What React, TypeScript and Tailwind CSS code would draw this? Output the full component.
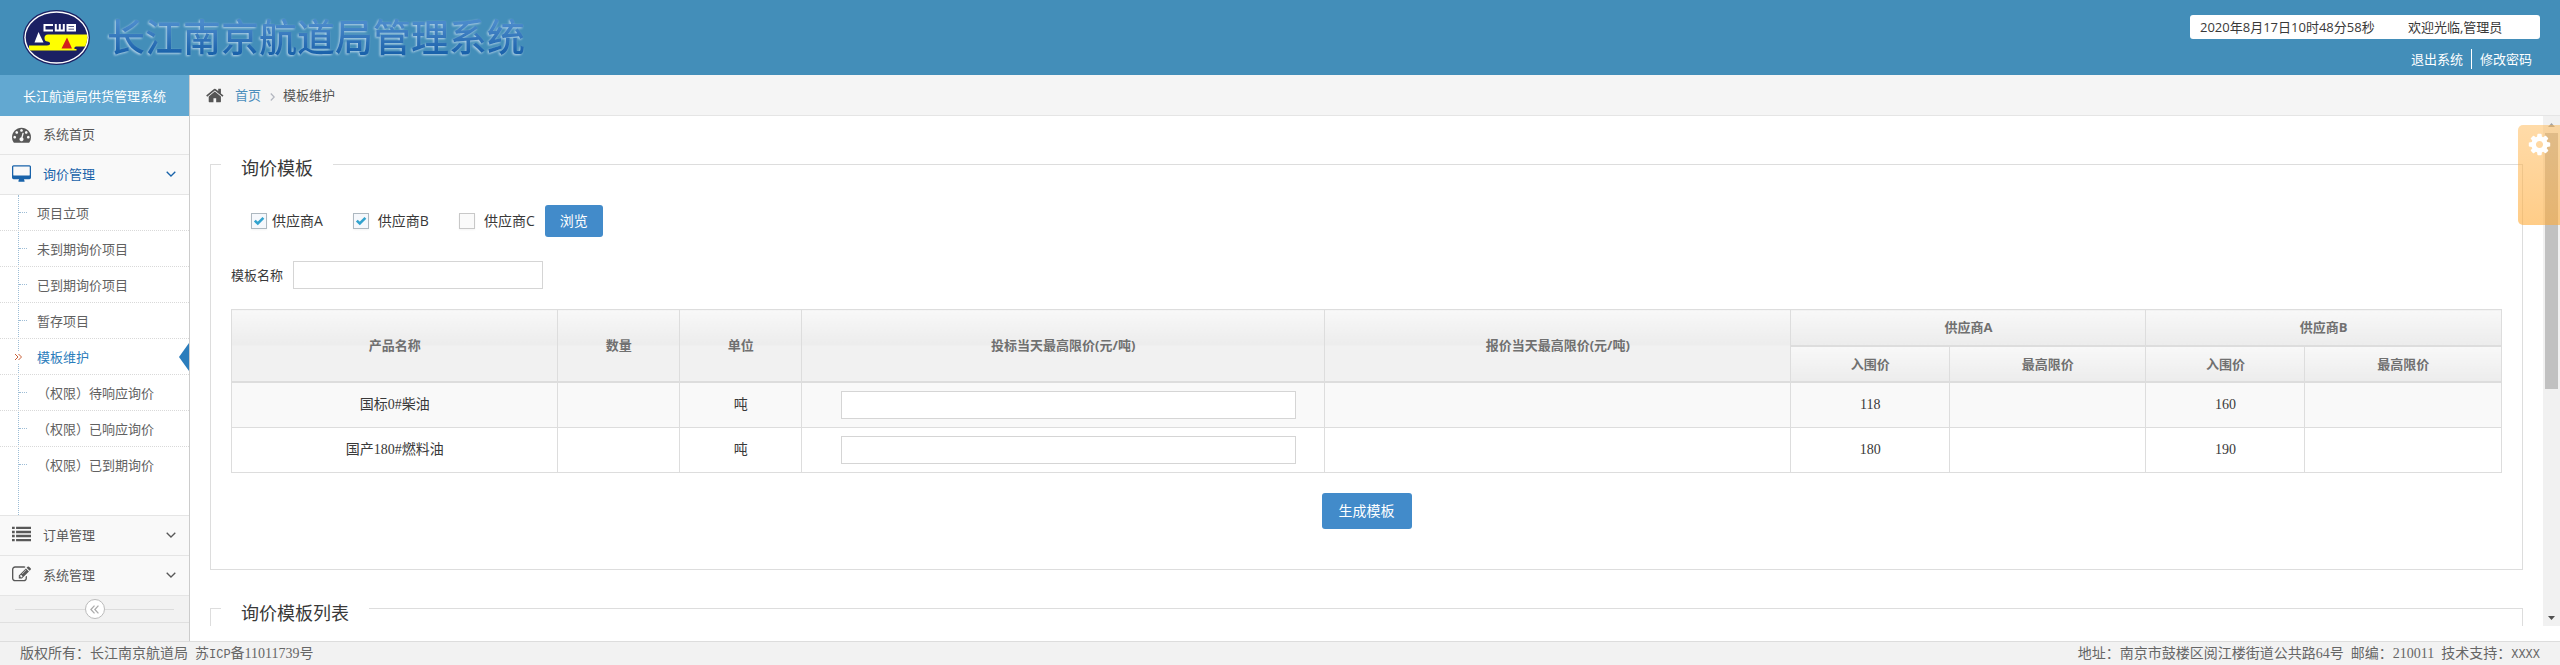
import React from "react";

const PATHS = {
  home: "M1408 992v480q0 26-19 45t-45 19h-384v-384h-256v384h-384q-26 0-45-19t-19-45v-480q0-1 .5-3t.5-3l575-474 575 474q1 2 1 6zm223-69l-62 74q-8 9-21 11h-3q-13 0-21-7l-692-577-692 577q-12 8-24 7-13-2-21-11l-62-74q-8-10-7-23.5t11-21.5l719-599q32-26 76-26t76 26l244 204v-195q0-14 9-23t23-9h192q14 0 23 9t9 23v408l219 182q10 8 11 21.5t-7 23.5z",
  dashboard:
    "M384 1152q0-53-37.5-90.5t-90.5-37.5-90.5 37.5-37.5 90.5 37.5 90.5 90.5 37.5 90.5-37.5 37.5-90.5zm192-448q0-53-37.5-90.5t-90.5-37.5-90.5 37.5-37.5 90.5 37.5 90.5 90.5 37.5 90.5-37.5 37.5-90.5zm428 481l101-382q6-26-7.5-48.5t-38.5-29.5-48 6.5-30 39.5l-101 382q-60 5-107 43.5t-63 98.5q-20 77 20 146t117 89 146-20 89-117q16-60-6-117t-72-91zm660-33q0-53-37.5-90.5t-90.5-37.5-90.5 37.5-37.5 90.5 37.5 90.5 90.5 37.5 90.5-37.5 37.5-90.5zm-640-640q0-53-37.5-90.5t-90.5-37.5-90.5 37.5-37.5 90.5 37.5 90.5 90.5 37.5 90.5-37.5 37.5-90.5zm448 192q0-53-37.5-90.5t-90.5-37.5-90.5 37.5-37.5 90.5 37.5 90.5 90.5 37.5 90.5-37.5 37.5-90.5zm320 448q0 261-141 483-19 29-54 29h-1402q-35 0-54-29-141-221-141-483 0-182 71-348t191-286 286-191 348-71 348 71 286 191 191 286 71 348z",
  desktop:
    "M1728 992v-832q0-13-9.5-22.5t-22.5-9.5h-1600q-13 0-22.5 9.5t-9.5 22.5v832q0 13 9.5 22.5t22.5 9.5h1600q13 0 22.5-9.5t9.5-22.5zm128-832v1088q0 66-47 113t-113 47h-544q0 37 16 77.5t32 71 16 43.5q0 26-19 45t-45 19h-512q-26 0-45-19t-19-45q0-14 16-44t32-70 16-78h-544q-66 0-113-47t-47-113v-1088q0-66 47-113t113-47h1600q66 0 113 47t47 113z",
  list: "M0 160h256v224H0zM384 160h1408v224H384zM0 544h256v224H0zM384 544h1408v224H384zM0 928h256v224H0zM384 928h1408v224H384zM0 1312h256v224H0zM384 1312h1408v224H384z",
  edit: "M888 1184l116-116-152-152-116 116v56h96v96h56zm440-720q-16-16-33 1l-350 350q-17 17-1 33t33-1l350-350q17-17 1-33zm80 594v190q0 119-84.5 203.5t-203.5 84.5h-832q-119 0-203.5-84.5t-84.5-203.5v-832q0-119 84.5-203.5t203.5-84.5h832q63 0 117 25 15 7 18 23 3 17-9 29l-49 49q-14 14-32 8-23-6-45-6h-832q-66 0-113 47t-47 113v832q0 66 47 113t113 47h832q66 0 113-47t47-113v-126q0-13 9-22l64-64q15-15 35-7t20 29zm-96-738l288 288-672 672h-288v-288zm444 132l-92 92-288-288 92-92q28-28 68-28t68 28l152 152q28 28 28 68t-28 68z",
  cog: "M1152 896q0-106-75-181t-181-75-181 75-75 181 75 181 181 75 181-75 75-181zm512-109v222q0 12-8 23t-20 13l-185 28q-19 54-39 91 35 50 107 138 10 12 10 25t-9 23q-27 37-99 108t-94 71q-12 0-26-9l-138-108q-44 23-91 38-16 136-29 186-7 28-36 28h-222q-14 0-24.5-8.5t-11.5-21.5l-28-184q-49-16-90-37l-141 107q-10 9-25 9-14 0-25-11-126-114-165-168-7-10-7-23 0-12 8-23 15-21 51-66.5t54-70.5q-27-50-41-99l-183-27q-13-2-21-12.5t-8-23.5v-222q0-12 8-23t19-13l186-28q14-46 39-92-40-57-107-138-10-12-10-24 0-10 9-23 26-36 98.5-107.5t94.5-71.5q13 0 26 10l138 107q44-23 91-38 16-136 29-186 7-28 36-28h222q14 0 24.5 8.5t11.5 21.5l28 184q49 16 90 37l142-107q9-9 24-9 13 0 25 10 129 119 165 170 7 8 7 22 0 12-8 23-15 21-51 66.5t-54 70.5q26 50 41 98l183 28q13 2 21 12.5t8 23.5z",
};

type IconName = keyof typeof PATHS;

function Icon({ name, className }: { name: IconName; className: string }) {
  return (
    <svg
      viewBox={name === "desktop" ? "-64 0 1920 1664" : "0 0 1792 1792"}
      fill="currentColor"
      className={className}
      aria-hidden="true"
    >
      <path d={PATHS[name]} />
    </svg>
  );
}

function AngleDown() {
  return (
    <svg viewBox="0 0 10 6" className="h-[6px] w-[10px]" fill="none" stroke="currentColor" strokeWidth="1.300" aria-hidden="true">
      <path d="M0.7 0.7 5 5 9.3 0.7" />
    </svg>
  );
}

function Logo() {
  return (
    <svg viewBox="0 0 67 55" className="h-[55px] w-[67px]" aria-hidden="true">
      <defs>
        <clipPath id="disc">
          <ellipse cx="33.5" cy="27.5" rx="30.8" ry="24.8" />
        </clipPath>
      </defs>
      <ellipse cx="33.5" cy="27.5" rx="33.5" ry="27.5" fill="#1b2063" />
      <ellipse cx="33.5" cy="27.5" rx="32.2" ry="26.2" fill="#fff" />
      <g clipPath="url(#disc)">
        <rect width="67" height="55" fill="#1b2063" />
        <path
          d="M25 24.500H67V36.500H53q-2 0-1.500 2.500h2v1.500H6V35.500H24q3.500 0 3-2.500-.5-1.500-2.500-1.500-3 0-3-3.500 0-3.500 3.500-3.500z"
          fill="#ffff00"
        />
      </g>
      <path d="M11.500 32.500 15.500 22 20.500 32.500z" fill="#fff" />
      <path d="M38.500 38.500 44 27.500 49 38.500z" fill="#d2201c" />
      <path
        d="M30 15h-8.500v5.500H30M32.800 14v7.500M36.800 14v7.500M40.800 14v7.500M32 20.500h9.800M44.500 15h7.500v5.500h-7.500zM44.500 17.800h7.500"
        fill="none"
        stroke="#fff"
        strokeWidth="2"
      />
    </svg>
  );
}

const SUB_ITEMS = [
  "项目立项",
  "未到期询价项目",
  "已到期询价项目",
  "暂存项目",
  "模板维护",
  "（权限）待响应询价",
  "（权限）已响应询价",
  "（权限）已到期询价",
];

function NavLink({ icon, label, arrow, active }: { icon: IconName; label: string; arrow?: boolean; active?: boolean }) {
  return (
    <a
      href="#"
      className={`flex items-center border-b border-[#e5e5e5] bg-[#f9f9f9] pr-[13px] pb-[2px] pl-3 ${
        arrow ? "h-10" : "h-[39px]"
      } ${active ? "text-[#1963aa]" : "text-[#585858]"}`}
    >
      <Icon name={icon} className="mr-3 h-[19px] w-[19px]" />
      <span className="flex-1">{label}</span>
      {arrow && <AngleDown />}
    </a>
  );
}

function SubItem({ label }: { label: string }) {
  const current = label === "模板维护";
  return (
    <li className="relative border-b border-dotted border-[#d9d9d9] last:border-b-0">
      {current ? (
        <span className="absolute top-[12px] left-[14px] bg-white py-[2px] text-[#c86139]">
          <svg viewBox="0 0 8 8" className="h-2 w-2" fill="none" stroke="currentColor" aria-hidden="true">
            <path d="M1 1 4 4 1 7M4.500 1 7.500 4 4.500 7" />
          </svg>
        </span>
      ) : (
        <span className="absolute top-[17px] left-[19px] w-2 border-t border-dotted border-[#9dbdd6]" />
      )}
      <a href="#" className={`flex h-[35px] items-center pl-[37px] ${current ? "text-[#2b7dbc]" : "text-[#616161]"}`}>
        {label}
      </a>
      {current && (
        <svg viewBox="0 0 10 28" className="absolute top-[4px] right-0 h-7 w-[10px]" aria-hidden="true">
          <path d="M10 0v28L0 14z" fill="#2b7dbc" />
        </svg>
      )}
    </li>
  );
}

function Sidebar() {
  return (
    <nav className="flex w-[190px] shrink-0 flex-col border-r border-[#ccc] bg-[#f2f2f2]">
      <div className="flex h-[41px] items-center bg-[#62a8d1] pl-[23px] text-white">长江航道局供货管理系统</div>
      <NavLink icon="dashboard" label="系统首页" />
      <NavLink icon="desktop" label="询价管理" arrow active />
      <div className="relative border-b border-[#e5e5e5] bg-white pb-[33px]">
        <span className="absolute inset-y-0 left-[18px] border-l border-dotted border-[#9dbdd6]" />
        <ul>
          {SUB_ITEMS.map((s) => (
            <SubItem key={s} label={s} />
          ))}
        </ul>
      </div>
      <NavLink icon="list" label="订单管理" arrow />
      <NavLink icon="edit" label="系统管理" arrow />
      <div className="flex h-[27px] items-center border-b border-[#e0e0e0] px-[15px]">
        <span className="h-px flex-1 bg-[#dcdcdc]" />
        <button
          type="button"
          aria-label="收起菜单"
          className="flex size-5 items-center justify-center rounded-full border border-[#bbb] bg-white text-[#aaa]"
        >
          <svg viewBox="0 0 8 8" className="h-[9px] w-[9px]" fill="none" stroke="currentColor" strokeWidth="1.100" aria-hidden="true">
            <path d="M4 .5.800 4 4 7.500M7.500.5 4.300 4 7.500 7.500" />
          </svg>
        </button>
        <span className="h-px flex-1 bg-[#dcdcdc]" />
      </div>
    </nav>
  );
}

function Check({ id, checked }: { id: string; checked?: boolean }) {
  return (
    <span className="grid size-4">
      <input
        id={id}
        type="checkbox"
        defaultChecked={checked}
        className="peer col-start-1 row-start-1 size-4 appearance-none border border-[#c8c8c8] bg-[#fafafa] shadow-xs checked:border-[#adb8c0] checked:bg-[#f5f8fc]"
      />
      <svg
        viewBox="0 0 16 16"
        className="pointer-events-none invisible col-start-1 row-start-1 size-4 peer-checked:visible"
        fill="none"
        stroke="#32a3ce"
        strokeWidth="2.600"
        aria-hidden="true"
      >
        <path d="M3.800 7.600 6.800 10.500 12.400 4.900" />
      </svg>
    </span>
  );
}

const ROWS = [
  { name: "国标0#柴油", unit: "吨", a: "118", b: "160" },
  { name: "国产180#燃料油", unit: "吨", a: "180", b: "190" },
];

const SERIF = "font-['Liberation_Serif','Noto_Sans_CJK_SC',serif]";
const TALL = "border border-[#ddd] bg-[linear-gradient(#f8f8f8,#ececec_50%,#f1f1f1_50%)]";
const SHORT = "h-[36px] border border-b-2 border-[#ddd] bg-linear-to-b from-[#f8f8f8] to-[#ececec]";

function PriceTable() {
  return (
    <table className="w-full table-fixed border-collapse border border-[#ddd] text-center">
      <colgroup>
        <col className="w-[14.380%]" />
        <col className="w-[5.370%]" />
        <col className="w-[5.370%]" />
        <col className="w-[23.040%]" />
        <col className="w-[20.530%]" />
        <col className="w-[7%]" />
        <col className="w-[8.650%]" />
        <col className="w-[7%]" />
        <col className="w-[8.660%]" />
      </colgroup>
      <thead className="border-b-2 border-[#ddd] text-[13px] text-[#707070]">
        <tr>
          <th rowSpan={2} className={TALL}>产品名称</th>
          <th rowSpan={2} className={TALL}>数量</th>
          <th rowSpan={2} className={TALL}>单位</th>
          <th rowSpan={2} className={TALL}>投标当天最高限价(元/吨)</th>
          <th rowSpan={2} className={TALL}>报价当天最高限价(元/吨)</th>
          <th colSpan={2} className={SHORT}>供应商A</th>
          <th colSpan={2} className={SHORT}>供应商B</th>
        </tr>
        <tr>
          <th className={SHORT}>入围价</th>
          <th className={SHORT}>最高限价</th>
          <th className={SHORT}>入围价</th>
          <th className={SHORT}>最高限价</th>
        </tr>
      </thead>
      <tbody className={`text-sm text-[#393939] ${SERIF}`}>
        {ROWS.map((r) => (
          <tr key={r.name} className="h-[45px] odd:bg-[#f9f9f9]">
            <td className="border border-[#ddd]">{r.name}</td>
            <td className="border border-[#ddd]" />
            <td className="border border-[#ddd]">{r.unit}</td>
            <td className="border border-[#ddd] p-2">
              <input
                type="text"
                aria-label={`${r.name} 投标当天最高限价`}
                className="ml-[10px] block h-7 w-[90%] justify-self-center border border-[#d5d5d5] bg-white px-1"
              />
            </td>
            <td className="border border-[#ddd]" />
            <td className="border border-[#ddd]">{r.a}</td>
            <td className="border border-[#ddd]" />
            <td className="border border-[#ddd]">{r.b}</td>
            <td className="border border-[#ddd]" />
          </tr>
        ))}
      </tbody>
    </table>
  );
}

function Content() {
  return (
    <div className="min-w-0 flex-1 overflow-hidden px-5 pt-[31px]">
      <fieldset className="border border-[#ddd] px-[10px] pb-10">
        <legend className="px-5 pt-2 text-lg leading-[26px] text-[#393939]">询价模板</legend>
        <div className="px-[10px] pt-6">
          <div className="flex items-center pl-5 text-sm text-[#393939]">
            <Check id="supplier-a" checked />
            <label htmlFor="supplier-a" className="mr-[30px] ml-[5px]">供应商A</label>
            <Check id="supplier-b" checked />
            <label htmlFor="supplier-b" className="mr-[30px] ml-[9px]">供应商B</label>
            <Check id="supplier-c" />
            <label htmlFor="supplier-c" className="mr-[10px] ml-[9px]">供应商C</label>
            <button type="button" className="h-8 rounded-[3px] bg-[#428bca] px-[15px] text-sm text-white">浏览</button>
          </div>
          <div className="mt-6 mb-5 flex items-center text-[#393939]">
            <label htmlFor="template-name" className="mr-[10px]">模板名称</label>
            <input id="template-name" type="text" className="h-7 w-[250px] border border-[#d5d5d5] bg-white px-1" />
          </div>
          <PriceTable />
          <div className="mt-5 flex justify-center">
            <button type="button" className="h-9 rounded-[3px] bg-[#428bca] px-[17px] text-sm text-white">生成模板</button>
          </div>
        </div>
      </fieldset>
      <fieldset className="mt-[22px] h-20 border border-[#ddd] px-[10px]">
        <legend className="px-5 pt-2 text-lg leading-[26px] text-[#393939]">询价模板列表</legend>
      </fieldset>
    </div>
  );
}

function ScrollTrack() {
  return (
    <div className="flex w-[17px] shrink-0 flex-col items-center bg-[#f1f1f1]" aria-hidden="true">
      <svg viewBox="0 0 17 17" className="size-[17px]">
        <path d="M5 11 8.500 7 12 11z" fill="#a3a3a3" />
      </svg>
      <div className="h-[256px] w-[13px] bg-[#c1c1c1]" />
      <div className="flex-1" />
      <svg viewBox="0 0 17 17" className="size-[17px]">
        <path d="M5 7 8.500 11 12 7z" fill="#505050" />
      </svg>
    </div>
  );
}

export default function App() {
  return (
    <div className="flex min-h-screen flex-col bg-white font-['Open_Sans','Noto_Sans_CJK_SC',sans-serif] text-[13px] leading-5">
      <header className="flex h-[75px] items-center justify-between bg-[#438eb9] pr-5 pl-[23px]">
        <div className="flex items-center gap-[17px]">
          <Logo />
          <h1 className="bg-linear-to-b from-[#4a8acb] from-20% to-[#1a62ab] to-80% bg-clip-text pb-1 text-[38px] leading-[46px] font-medium text-transparent [filter:drop-shadow(-1px_1px_1px_#b9d6ea)]">
            长江南京航道局管理系统
          </h1>
        </div>
        <div className="flex w-[350px] flex-col items-end gap-[10px] pt-2">
          <div className="flex h-6 w-full items-center rounded-[3px] bg-white px-[10px] text-[#393939]">
            <span className="w-[208px]">2020年8月17日10时48分58秒</span>
            <span>欢迎光临,管理员</span>
          </div>
          <div className="flex h-5 items-center pr-2 text-white">
            <a href="#" className="border-r border-white pr-2">退出系统</a>
            <a href="#" className="pl-2">修改密码</a>
          </div>
        </div>
      </header>

      <div className="flex flex-1">
        <Sidebar />
        <main className="flex min-w-0 flex-1 flex-col">
          <div className="flex h-[41px] items-center border-b border-[#e5e5e5] bg-[#f5f5f5] pl-4 text-[#555]">
            <Icon name="home" className="mr-[10px] size-[19px]" />
            <a href="#" className="text-[#4c8fbd]">首页</a>
            <svg viewBox="0 0 5 8" className="mr-2 ml-[9px] mt-1 h-2 w-[5px]" fill="none" stroke="#b2b6bf" strokeWidth="1.200" aria-hidden="true">
              <path d="M.8.5 4.200 4 .8 7.500" />
            </svg>
            <span>模板维护</span>
          </div>
          <div className="relative mb-[15px] flex h-[510px] flex-none">
            <Content />
            <ScrollTrack />
            <button
              type="button"
              aria-label="设置"
              className="absolute top-[9px] right-0 flex h-[100px] w-[42px] justify-center rounded-l-[5px] bg-linear-to-b from-[#ffb752]/50 to-[#ffab38]/60 pt-[7px] text-white"
            >
              <Icon name="cog" className="size-[25px]" />
            </button>
          </div>
        </main>
      </div>

      <footer className={`flex h-6 items-center justify-between border-t border-[#ddd] bg-[#f2f2f2] px-5 text-sm text-[#666] ${SERIF}`}>
        <p>
          版权所有：长江南京航道局&nbsp;&nbsp;苏<span className="font-['Liberation_Mono',monospace] text-xs">ICP</span>备11011739号
        </p>
        <p>
          地址：南京市鼓楼区阅江楼街道公共路64号&nbsp;&nbsp;邮编：210011&nbsp;&nbsp;技术支持：
          <span className="font-['Liberation_Mono',monospace] text-xs">XXXX</span>
        </p>
      </footer>
    </div>
  );
}
